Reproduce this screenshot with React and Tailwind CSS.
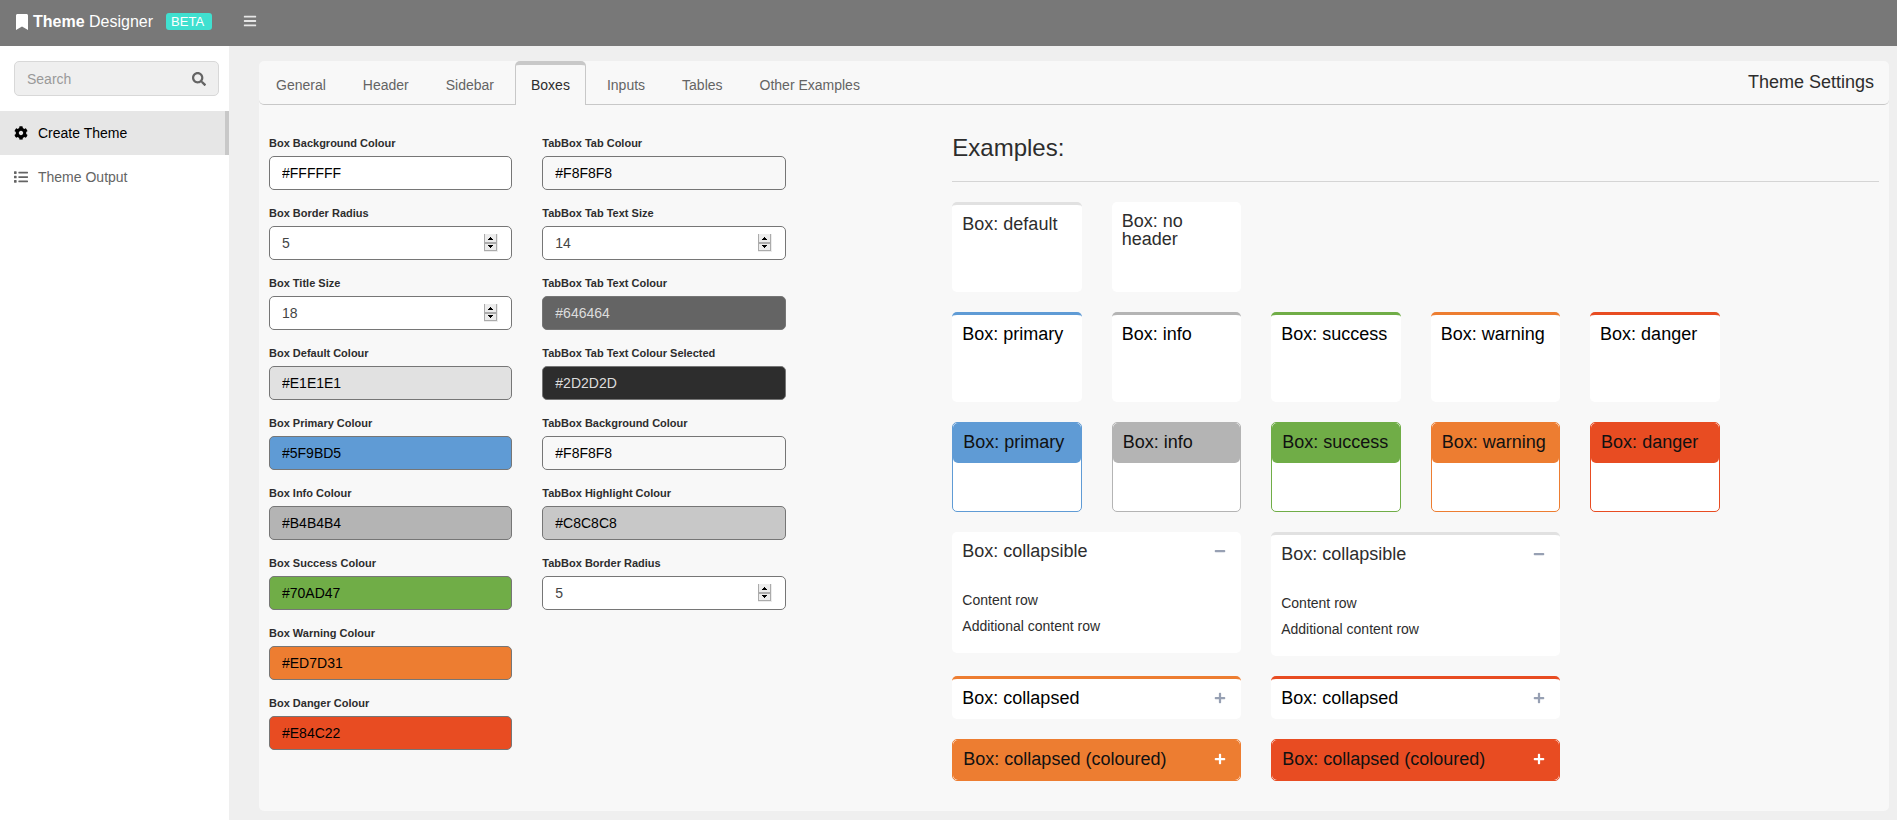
import { FaBookmark, FaBars, FaSearch, FaCog, FaList, FaMinus, FaPlus } from "react-icons/fa";

const tabs = ["General", "Header", "Sidebar", "Boxes", "Inputs", "Tables", "Other Examples"];

const boxFields = [
  { id: "box-bg", label: "Box Background Colour", value: "#FFFFFF", style: "bg-[#ffffff] text-black" },
  { id: "box-radius", label: "Box Border Radius", value: 5, number: true },
  { id: "box-title", label: "Box Title Size", value: 18, number: true },
  { id: "box-default", label: "Box Default Colour", value: "#E1E1E1", style: "bg-[#e1e1e1] text-black" },
  { id: "box-primary", label: "Box Primary Colour", value: "#5F9BD5", style: "bg-[#5f9bd5] text-black" },
  { id: "box-info", label: "Box Info Colour", value: "#B4B4B4", style: "bg-[#b4b4b4] text-black" },
  { id: "box-success", label: "Box Success Colour", value: "#70AD47", style: "bg-[#70ad47] text-black" },
  { id: "box-warning", label: "Box Warning Colour", value: "#ED7D31", style: "bg-[#ed7d31] text-black" },
  { id: "box-danger", label: "Box Danger Colour", value: "#E84C22", style: "bg-[#e84c22] text-black" },
];

const tabFields = [
  { id: "tab-colour", label: "TabBox Tab Colour", value: "#F8F8F8", style: "bg-[#f8f8f8] text-black" },
  { id: "tab-size", label: "TabBox Tab Text Size", value: 14, number: true },
  { id: "tab-text", label: "TabBox Tab Text Colour", value: "#646464", style: "bg-[#646464] text-[#dddddd]" },
  { id: "tab-selected", label: "TabBox Tab Text Colour Selected", value: "#2D2D2D", style: "bg-[#2d2d2d] text-[#dddddd]" },
  { id: "tab-bg", label: "TabBox Background Colour", value: "#F8F8F8", style: "bg-[#f8f8f8] text-black" },
  { id: "tab-highlight", label: "TabBox Highlight Colour", value: "#C8C8C8", style: "bg-[#c8c8c8] text-black" },
  { id: "tab-radius", label: "TabBox Border Radius", value: 5, number: true },
];

const statuses = [
  { name: "primary", border: "border-[#5f9bd5]", bg: "bg-[#5f9bd5]" },
  { name: "info", border: "border-[#b4b4b4]", bg: "bg-[#b4b4b4]" },
  { name: "success", border: "border-[#70ad47]", bg: "bg-[#70ad47]" },
  { name: "warning", border: "border-[#ed7d31]", bg: "bg-[#ed7d31]" },
  { name: "danger", border: "border-[#e84c22]", bg: "bg-[#e84c22]" },
];

function Spinner() {
  return (
    <svg className="pointer-events-none absolute right-[14px] top-2 h-[18px] w-[14px]" viewBox="0 0 14 18" shapeRendering="crispEdges" aria-hidden="true">
      <rect width="14" height="18" fill="#ececec" />
      <path d="M0 0h1v17h-1zM12 0h1v17h-1zM1 8h11v2h-11zM1 16h11v1h-11z" fill="#ababab" />
      <path d="M6 3h1v1h1v1h1v1h-5v-1h1v-1h1zM4 11h5v1h-1v1h-1v1h-1v-1h-1v-1h-1z" fill="#000" />
    </svg>
  );
}

function Field({ id, label, value, number, style }) {
  return (
    <div className="mb-[15px]">
      <label htmlFor={id} className="mb-1 block text-[11px] leading-[17px] font-bold text-[#2d2d2d]">
        {label}
      </label>
      <div className="relative">
        <input
          id={id}
          type={number ? "number" : "text"}
          defaultValue={value}
          className={`block h-[34px] w-full appearance-none rounded-[5px] border border-[#767676] px-3 text-sm ${
            number
              ? "bg-white text-[#444444] [-moz-appearance:textfield] [&::-webkit-inner-spin-button]:appearance-none"
              : style
          }`}
        />
        {number && <Spinner />}
      </div>
    </div>
  );
}

function Box({ className = "", title, dark, action, children }) {
  return (
    <section className={`rounded-[5px] bg-white ${className}`}>
      <header className="flex h-10 justify-between p-[10px]">
        <h3 className={`text-lg leading-[18px] ${dark ? "text-black" : "text-[#2d2d2d]"}`}>{title}</h3>
        {action}
      </header>
      {children}
    </section>
  );
}

function ToggleButton({ open, light, label }) {
  return (
    <button
      type="button"
      aria-label={label}
      className={`flex h-[18px] items-center text-xs ${light ? "mr-1 text-white" : "mr-[5px] text-[#97a0b3]"}`}
    >
      {open ? <FaMinus /> : <FaPlus />}
    </button>
  );
}

function ContentRows() {
  return (
    <div className="px-[10px] pt-[15px] pb-[14px] text-sm leading-[26px] text-[#2d2d2d]">
      <p>Content row</p>
      <p>Additional content row</p>
    </div>
  );
}

export default function App() {
  return (
    <div className="flex min-h-screen flex-col bg-[#efefef] font-['Liberation_Sans',Arial,sans-serif] text-sm">
      <header className="flex h-[46px] items-center bg-[#787878] pb-[10px] text-white">
        <a href="#home" className="flex w-[229px] items-center pt-[7px] pl-[14px] text-base leading-6">
          <FaBookmark className="mr-[3px]" />
          <span>
            <b>Theme</b> Designer
          </span>
          <span className="ml-[13px] h-[17px] w-[46px] rounded-[3px] bg-[#40e0d0] pl-[5px] text-[13px] leading-[18px]">BETA</span>
        </a>
        <button type="button" aria-label="Toggle sidebar" className="ml-[14px] pt-[6px] text-sm text-[#e6e6e6]">
          <FaBars />
        </button>
      </header>

      <div className="flex flex-1">
        <aside className="w-[229px] shrink-0 bg-white">
          <form className="mt-[15px] mr-[10px] mb-[15px] ml-[14px] flex h-[35px] items-center rounded-[5px] border border-[#d8d8d8] bg-[#efefef] pr-3">
            <input
              type="text"
              aria-label="Search"
              placeholder="Search"
              className="min-w-0 flex-1 bg-transparent pl-3 text-sm outline-none placeholder:text-[#999999]"
            />
            <button type="button" aria-label="Submit search" className="text-sm text-[#646464]">
              <FaSearch />
            </button>
          </form>
          <nav>
            <a href="#create" className="flex h-11 items-center gap-[10px] border-r-4 border-[#c8c8c8] bg-[#e6e6e6] pl-[14px] text-black">
              <FaCog />
              Create Theme
            </a>
            <a href="#output" className="flex h-11 items-center gap-[10px] pl-[14px] text-[#646464]">
              <FaList />
              Theme Output
            </a>
          </nav>
        </aside>

        <main className="flex-1 pt-[15px] pr-2 pb-[9px] pl-[30px]">
          <div className="rounded-[5px] bg-[#f8f8f8]">
            <div className="flex h-11 justify-between rounded-[5px] border-b border-[#c8c8c8]">
              <div role="tablist" className="flex h-11 gap-[5px] pl-px">
                {tabs.map((tab) => (
                  <button
                    key={tab}
                    type="button"
                    role="tab"
                    aria-selected={tab === "Boxes"}
                    className={
                      tab === "Boxes"
                        ? "rounded-t-[5px] border-x border-t-4 border-[#c8c8c8] bg-[#f8f8f8] px-[15px] text-[#2d2d2d]"
                        : "border-x border-t-4 border-transparent px-[15px] text-[#646464]"
                    }
                  >
                    {tab}
                  </button>
                ))}
              </div>
              <h2 className="pt-[10px] pr-[15px] text-lg leading-[22px] text-[#2d2d2d]">Theme Settings</h2>
            </div>

            <div className="grid grid-cols-12 gap-x-[30px] px-[10px] pt-[30px] pb-[30px]">
              <div className="col-span-2">
                {boxFields.map((f) => (
                  <Field key={f.id} {...f} />
                ))}
              </div>
              <div className="col-span-2">
                {tabFields.map((f) => (
                  <Field key={f.id} {...f} />
                ))}
              </div>
              <div className="col-span-7 col-start-6">
                <h1 className="border-b border-[#d5d5d5] pb-5 text-2xl leading-[26px] text-[#2d2d2d]">Examples:</h1>
                <div className="mt-5 grid grid-cols-6 items-start gap-x-[30px] gap-y-5">
                  <Box title="Box: default" className="min-h-[90px] border-t-[3px] border-[#e1e1e1]" />
                  <Box title="Box: no header" className="min-h-[90px]" />
                  {statuses.map((s, i) => (
                    <Box
                      key={s.name}
                      dark
                      title={`Box: ${s.name}`}
                      className={`min-h-[90px] border-t-[3px] ${s.border} ${i === 0 ? "col-start-1" : ""}`}
                    />
                  ))}
                  {statuses.map((s, i) => (
                    <section key={s.name} className={`min-h-[90px] rounded-[5px] border bg-white ${s.border} ${i === 0 ? "col-start-1" : ""}`}>
                      <h3 className={`h-10 rounded-[5px] p-[10px] text-lg leading-[18px] text-[#111111] ${s.bg}`}>Box: {s.name}</h3>
                    </section>
                  ))}
                  <Box title="Box: collapsible" className="col-span-2 col-start-1" action={<ToggleButton open label="Collapse" />}>
                    <ContentRows />
                  </Box>
                  <Box
                    title="Box: collapsible"
                    className="col-span-2 border-t-[3px] border-[#e1e1e1]"
                    action={<ToggleButton open label="Collapse" />}
                  >
                    <ContentRows />
                  </Box>
                  <Box
                    dark
                    title="Box: collapsed"
                    className="col-span-2 col-start-1 border-t-[3px] border-[#ed7d31]"
                    action={<ToggleButton label="Expand" />}
                  />
                  <Box dark title="Box: collapsed" className="col-span-2 border-t-[3px] border-[#e84c22]" action={<ToggleButton label="Expand" />} />
                  <section className="col-span-2 col-start-1 rounded-[5px] border border-[#ed7d31] bg-white">
                    <header className="flex h-10 justify-between rounded-[5px] bg-[#ed7d31] p-[10px]">
                      <h3 className="text-lg leading-[18px] text-[#111111]">Box: collapsed (coloured)</h3>
                      <ToggleButton light label="Expand" />
                    </header>
                  </section>
                  <section className="col-span-2 rounded-[5px] border border-[#e84c22] bg-white">
                    <header className="flex h-10 justify-between rounded-[5px] bg-[#e84c22] p-[10px]">
                      <h3 className="text-lg leading-[18px] text-[#111111]">Box: collapsed (coloured)</h3>
                      <ToggleButton light label="Expand" />
                    </header>
                  </section>
                </div>
              </div>
            </div>
          </div>
        </main>
      </div>
    </div>
  );
}
